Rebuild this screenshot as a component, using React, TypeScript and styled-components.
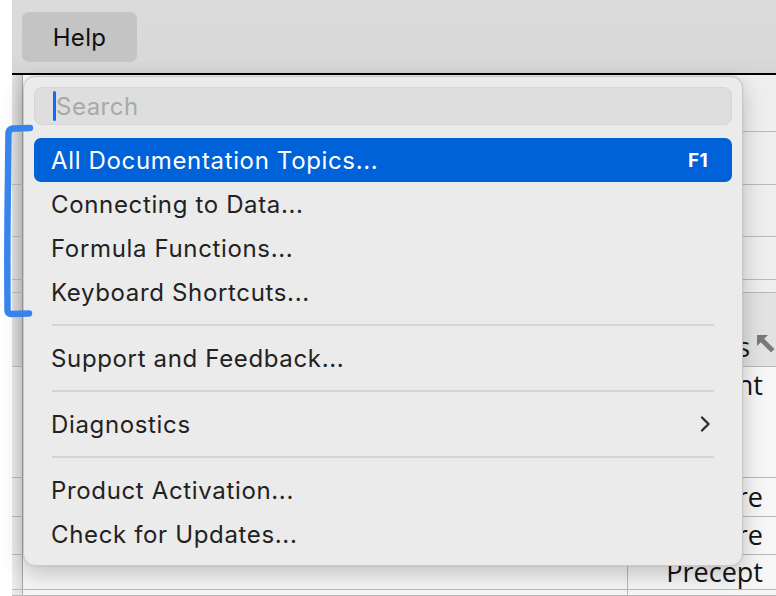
import React from 'react'
import styled, { createGlobalStyle } from 'styled-components'

const GlobalStyle = createGlobalStyle`
  html, body {
    margin: 0;
    padding: 0;
    background: #ffffff;
  }
  * {
    box-sizing: border-box;
  }
`

interface SheetRowData {
  height: number
  text?: string
  align?: 'top' | 'bottom' | 'center'
  shade?: 'light' | 'header' | 'plain'
  arrow?: boolean
  divider?: boolean
}

const sheetRows: SheetRowData[] = [
  { height: 57, shade: 'light' },
  { height: 53, shade: 'light' },
  { height: 52, shade: 'light' },
  { height: 43, shade: 'light' },
  { height: 13, shade: 'light' },
  { height: 74, text: 'Status', align: 'bottom', shade: 'header', arrow: true },
  { height: 111, text: 'Amount', align: 'top', shade: 'plain' },
  { height: 39, text: 'Software', shade: 'plain' },
  { height: 38, text: 'Software', shade: 'plain' },
  { height: 35, text: 'Precept', shade: 'plain', divider: true },
  { height: 6, shade: 'plain', divider: true },
]

const menuGroups = [
  [
    { label: 'All Documentation Topics...', shortcut: 'F1', active: true },
    { label: 'Connecting to Data...' },
    { label: 'Formula Functions...' },
    { label: 'Keyboard Shortcuts...' },
  ],
  [{ label: 'Support and Feedback...' }],
  [{ label: 'Diagnostics', submenu: true }],
  [{ label: 'Product Activation...' }, { label: 'Check for Updates...' }],
]

export default function App() {
  return (
    <>
      <GlobalStyle />
      <Page>
        <TopBar>
          <HelpButton>Help</HelpButton>
        </TopBar>

        <Sheet>
          {sheetRows.map((row, i) => (
            <SheetRow key={i} $height={row.height}>
              <Gutter $shade={row.shade} />
              <SheetMain $shade={row.shade} $align={row.align}>
                {row.text && (
                  <SheetCell $divider={row.divider} $arrow={row.arrow}>
                    {row.text}
                    {row.arrow && (
                      <ArrowIcon width="20" height="20" viewBox="0 0 20 20">
                        <path d="M1 1 L12 1 L8.2 4.8 L18.5 15.1 L15.1 18.5 L4.8 8.2 L1 12 Z" fill="#7a7a7a" />
                      </ArrowIcon>
                    )}
                  </SheetCell>
                )}
                {!row.text && row.divider && <SheetCell $divider />}
              </SheetMain>
            </SheetRow>
          ))}
        </Sheet>

        <Menu>
          <SearchField>
            <Caret />
            <SearchInput placeholder="Search" readOnly />
          </SearchField>

          {menuGroups.map((group, gi) => (
            <React.Fragment key={gi}>
              {gi > 0 && (
                <Separator>
                  <SeparatorLine />
                </Separator>
              )}
              {group.map((item: { label: string; shortcut?: string; active?: boolean; submenu?: boolean }) => (
                <MenuItem key={item.label} $active={item.active}>
                  <span>{item.label}</span>
                  {item.shortcut && <Shortcut>{item.shortcut}</Shortcut>}
                  {item.submenu && (
                    <Chevron width="14" height="18" viewBox="0 0 14 18">
                      <path d="M4 2.5 L10.5 9 L4 15.5" fill="none" stroke="#2e2e2e" strokeWidth="2.4" strokeLinecap="round" strokeLinejoin="round" />
                    </Chevron>
                  )}
                </MenuItem>
              ))}
            </React.Fragment>
          ))}
        </Menu>

        <Bracket width="40" height="210" viewBox="0 0 40 210">
          <path
            d="M30 10 L13 10.5 Q9 11 8.5 15 L8 60 Q7 120 7.5 192 Q7.5 196 11.5 196 L29 195.5"
            fill="none"
            stroke="#3884ee"
            strokeWidth="6.5"
            strokeLinecap="round"
            strokeLinejoin="round"
          />
        </Bracket>
      </Page>
    </>
  )
}

const Page = styled.div`
  position: relative;
  width: 776px;
  height: 596px;
  overflow: hidden;
  padding-left: 12px;
  display: flex;
  flex-direction: column;
  background: #ffffff;
  font-family: Inter, 'Noto Sans', sans-serif;
`

const TopBar = styled.div`
  height: 75px;
  flex-shrink: 0;
  display: flex;
  align-items: flex-start;
  padding: 12px 10px 0;
  background: linear-gradient(180deg, #dbdbdb 0%, #d9d9d9 80%, #d4d4d4 100%);
  border-bottom: 2px solid #000000;
`

const HelpButton = styled.div`
  width: 115px;
  height: 50px;
  display: flex;
  align-items: center;
  justify-content: center;
  border-radius: 7px;
  background: #c4c4c4;
  color: #111111;
  font-size: 24px;
  letter-spacing: 0.3px;
`

const Sheet = styled.div`
  flex: 1;
  display: flex;
  flex-direction: column;
`

const SheetRow = styled.div<{ $height: number }>`
  height: ${(p) => p.$height}px;
  flex-shrink: 0;
  display: flex;
  border-bottom: 1px solid #b9b9b9;
`

const Gutter = styled.div<{ $shade?: string }>`
  width: 11px;
  flex-shrink: 0;
  border-right: 1px solid #a8a8a8;
  background: ${(p) =>
    p.$shade === 'plain'
      ? 'linear-gradient(90deg, #ececec, #e0e0e0)'
      : 'linear-gradient(90deg, #e2e2e2, #cfcfcf)'};
`

const SheetMain = styled.div<{ $shade?: string; $align?: string }>`
  flex: 1;
  display: flex;
  justify-content: flex-end;
  align-items: ${(p) =>
    p.$align === 'top' ? 'flex-start' : p.$align === 'bottom' ? 'flex-end' : 'stretch'};
  background: ${(p) =>
    p.$shade === 'header'
      ? 'linear-gradient(90deg, #ededed, #e2e2e2)'
      : p.$shade === 'light'
        ? 'linear-gradient(90deg, #f8f8f8, #eeeeee)'
        : '#f6f6f6'};
`

const SheetCell = styled.div<{ $divider?: boolean; $arrow?: boolean }>`
  display: flex;
  align-items: center;
  justify-content: flex-end;
  gap: 6px;
  padding: ${(p) => (p.$arrow ? '4px 0 4px 0' : '3px 13px 4px 0')};
  width: ${(p) => (p.$divider ? '149px' : 'auto')};
  border-left: ${(p) => (p.$divider ? '1px solid #b9b9b9' : 'none')};
  font-family: 'Open Sans', 'Noto Sans', sans-serif;
  font-size: 27px;
  line-height: 30px;
  color: #141414;
  white-space: nowrap;
`

const ArrowIcon = styled.svg`
  flex-shrink: 0;
  align-self: flex-start;
  margin-top: 2px;
`

const Menu = styled.div`
  position: absolute;
  left: 23px;
  top: 76px;
  width: 720px;
  height: 490px;
  padding: 10px 10px 9px;
  border-radius: 12px;
  background: #ebebeb;
  border: 1px solid #c9c9c9;
  box-shadow: 0 8px 22px rgba(0, 0, 0, 0.22), 0 0 2px rgba(0, 0, 0, 0.1);
  display: flex;
  flex-direction: column;
`

const SearchField = styled.div`
  height: 38px;
  flex-shrink: 0;
  margin-bottom: 13px;
  display: flex;
  align-items: center;
  padding-left: 18px;
  border-radius: 8px;
  background: #dedede;
  border: 1px solid #d5d5d5;
`

const Caret = styled.div`
  width: 3px;
  height: 30px;
  border-radius: 2px;
  background: #0a6dff;
  flex-shrink: 0;
`

const SearchInput = styled.input`
  flex: 1;
  border: none;
  outline: none;
  background: transparent;
  padding: 0;
  font-family: Inter, 'Noto Sans', sans-serif;
  font-size: 24px;
  letter-spacing: 0.5px;
  color: #222;
  &::placeholder {
    color: #a9a9a9;
  }
`

const MenuItem = styled.div<{ $active?: boolean }>`
  height: 44px;
  flex-shrink: 0;
  display: flex;
  align-items: center;
  justify-content: space-between;
  padding: 0 21px 0 17px;
  border-radius: 7px;
  background: ${(p) => (p.$active ? '#0062d8' : 'transparent')};
  color: ${(p) => (p.$active ? '#ffffff' : '#222222')};
  font-size: 24px;
  letter-spacing: 0.65px;
`

const Shortcut = styled.span`
  font-weight: 700;
  font-size: 19px;
  letter-spacing: 0.3px;
  padding-right: 3px;
`

const Chevron = styled.svg`
  flex-shrink: 0;
  margin-right: -1px;
`

const Separator = styled.div`
  height: 22px;
  flex-shrink: 0;
  display: flex;
  align-items: center;
  padding: 0 18px;
`

const SeparatorLine = styled.div`
  flex: 1;
  height: 2px;
  background: #d5d5d5;
`

const Bracket = styled.svg`
  position: absolute;
  left: 0;
  top: 118px;
`
